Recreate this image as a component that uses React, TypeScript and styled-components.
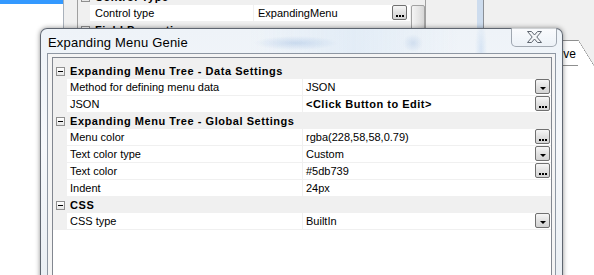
import React from "react";
import styled, { createGlobalStyle } from "styled-components";

type PropItem = {
  label: string;
  value: string;
  button?: "drop" | "dots";
  bold?: boolean;
};

type Category = {
  title: string;
  items: PropItem[];
};

const categories: Category[] = [
  {
    title: "Expanding Menu Tree - Data Settings",
    items: [
      { label: "Method for defining menu data", value: "JSON", button: "drop" },
      { label: "JSON", value: "<Click Button to Edit>", button: "dots", bold: true },
    ],
  },
  {
    title: "Expanding Menu Tree - Global Settings",
    items: [
      { label: "Menu color", value: "rgba(228,58,58,0.79)", button: "dots" },
      { label: "Text color type", value: "Custom", button: "drop" },
      { label: "Text color", value: "#5db739", button: "dots" },
      { label: "Indent", value: "24px" },
    ],
  },
  {
    title: "CSS",
    items: [{ label: "CSS type", value: "BuiltIn", button: "drop" }],
  },
];

const GlobalStyle = createGlobalStyle`
  html, body {
    margin: 0;
    padding: 0;
  }
  body {
    font-family: "Liberation Sans", Arial, sans-serif;
    font-size: 11px;
    color: #000;
  }
`;

const Screen = styled.div`
  position: relative;
  width: 594px;
  height: 275px;
  overflow: hidden;
  background: #f0f0f0;
`;

/* ---------- window behind the dialog ---------- */

const BgWindow = styled.div`
  display: flex;
  height: 100%;
`;

const TreePane = styled.div`
  width: 63px;
  background: #fff;
  border-right: 1px solid #a9b1bb;
`;

const Selection = styled.div`
  height: 4px;
  background: #3399ff;
`;

const Splitter = styled.div`
  width: 13px;
  background: #f0f0f0;
  border-right: 1px solid #a0a0a0;
`;

const BgGrid = styled.div`
  width: 332px;
  background: #fff;
  overflow: hidden;
`;

const BgGridInner = styled.div`
  margin-top: -11px;
`;

const Scrollbar = styled.div`
  width: 15px;
  background: #f0f0f0;
  border-right: 1px solid #a0a0a0;
  padding-top: 5px;
  display: flex;
  justify-content: center;
`;

const Thumb = styled.div`
  width: 12px;
  height: 60px;
  border: 1px solid #a2a2a2;
  border-radius: 2px;
  background: linear-gradient(90deg, #f4f4f4, #e4e4e4 60%, #d6d6d6);
`;

const RightArea = styled.div`
  flex: 1;
  display: flex;
`;

const Gap = styled.div`
  width: 51px;
`;

const BlueRule = styled.div`
  width: 6px;
  background: #cddcee;
  border-right: 1px solid #8a8f96;
`;

const TabPane = styled.div`
  flex: 1;
  display: flex;
  flex-direction: column;
`;

const TabStrip = styled.div`
  display: flex;
  padding: 40px 0 0 63px;
  border-bottom: 1px solid #8e8f8f;
`;

const Tab = styled.div`
  position: relative;
  height: 25px;
  padding: 6px 2px 0 6px;
  box-sizing: border-box;
  background: #fff;
  border-top: 1px solid #8e8f8f;
  border-left: 1px solid #8e8f8f;
  font-size: 12px;

  &::after {
    content: "";
    position: absolute;
    top: -1px;
    right: -16px;
    width: 16px;
    height: 26px;
    background: linear-gradient(
      to top right,
      #fff 49%,
      #8e8f8f 50%,
      transparent 53%
    );
  }
`;

const TabBody = styled.div`
  flex: 1;
  background: #fff;
`;

/* ---------- property grid parts ---------- */

const CatRow = styled.div<{ $indent: number }>`
  display: flex;
  align-items: center;
  gap: 5px;
  height: 16px;
  padding-left: ${(p) => p.$indent}px;
  background: #f0f0f0;
  font-weight: bold;
  letter-spacing: 0.55px;
  white-space: nowrap;
`;

const MinusBox = styled.span`
  position: relative;
  width: 9px;
  height: 9px;
  box-sizing: border-box;
  border: 1px solid #8f8f8f;
  background: linear-gradient(#fff, #e6e6e6);
  flex-shrink: 0;

  &::after {
    content: "";
    position: absolute;
    left: 1px;
    top: 3px;
    width: 5px;
    height: 1px;
    background: #000;
  }
`;

const PropRow = styled.div`
  display: flex;
  height: 17px;
  box-sizing: border-box;
  border-bottom: 1px solid #f0f0f0;
`;

const Margin = styled.div<{ $w: number }>`
  width: ${(p) => p.$w}px;
  background: #f0f0f0;
  flex-shrink: 0;
`;

const Label = styled.div<{ $w: number; $pad: number }>`
  width: ${(p) => p.$w}px;
  padding-left: ${(p) => p.$pad}px;
  box-sizing: border-box;
  border-right: 1px solid #f0f0f0;
  line-height: 16px;
  white-space: nowrap;
  overflow: hidden;
  flex-shrink: 0;
`;

const Value = styled.div<{ $pad: number; $bold?: boolean; $right: number }>`
  flex: 1;
  display: flex;
  align-items: flex-start;
  padding-left: ${(p) => p.$pad}px;
  padding-right: ${(p) => p.$right}px;
  line-height: 16px;
  font-weight: ${(p) => (p.$bold ? "bold" : "normal")};
  letter-spacing: ${(p) => (p.$bold ? "0.5px" : "0")};
  white-space: nowrap;

  & > span {
    flex: 1;
  }
`;

const SmallButton = styled.div`
  width: 15px;
  height: 15px;
  box-sizing: border-box;
  border: 1px solid #707070;
  border-radius: 2px;
  background: linear-gradient(#f6f6f6, #e2e2e2 50%, #d3d3d3);
  display: flex;
  align-items: flex-end;
  justify-content: center;
  padding-bottom: 2px;
  gap: 1px;
`;

const Arrow = styled.span`
  width: 0;
  height: 0;
  margin-bottom: 1px;
  border-left: 3px solid transparent;
  border-right: 3px solid transparent;
  border-top: 3px solid #000;
`;

const Dot = styled.span`
  width: 2px;
  height: 2px;
  background: #000;
`;

const CellButton = ({ kind }: { kind: "drop" | "dots" }) =>
  kind === "drop" ? (
    <SmallButton>
      <Arrow />
    </SmallButton>
  ) : (
    <SmallButton>
      <Dot />
      <Dot />
      <Dot />
    </SmallButton>
  );

/* ---------- dialog ---------- */

const Dialog = styled.div`
  position: absolute;
  left: 40px;
  top: 28px;
  width: 523px;
  height: 262px;
  box-sizing: border-box;
  border: 1px solid rgba(60, 68, 80, 0.8);
  border-bottom: none;
  border-radius: 7px 7px 0 0;
  padding: 0 6px;
  display: flex;
  flex-direction: column;
  box-shadow: 0 0 5px rgba(0, 0, 0, 0.45);
  background: radial-gradient(
      ellipse 42px 7px at 255px 14px,
      rgba(140, 175, 220, 0.35),
      transparent
    ),
    radial-gradient(
      ellipse 10px 9px at 372px 14px,
      rgba(150, 180, 220, 0.3),
      transparent
    ),
    radial-gradient(
      ellipse 6px 30px at 440px 20px,
      rgba(170, 200, 235, 0.35),
      transparent
    ),
    linear-gradient(90deg, transparent 40%, rgba(215, 230, 245, 0.5) 60%, transparent 80%),
    linear-gradient(180deg, #eef3f8 0%, #f6f8fb 45%, #e9eef3 100%);
`;

const TitleBar = styled.div`
  display: flex;
  align-items: flex-start;
  height: 24px;
  flex-shrink: 0;
`;

const Title = styled.div`
  margin: 6px 0 0 1px;
  font-size: 13px;
  line-height: 16px;
  letter-spacing: 0.2px;
  color: #000;
`;

const CloseButton = styled.div`
  margin: -1px -1px 0 auto;
  width: 46px;
  height: 19px;
  box-sizing: border-box;
  border: 1px solid rgba(90, 100, 115, 0.55);
  border-top: none;
  border-radius: 0 0 5px 5px;
  background: linear-gradient(rgba(255, 255, 255, 0.7), rgba(235, 240, 246, 0.6));
  display: flex;
  align-items: center;
  justify-content: center;
`;

const Client = styled.div`
  flex: 1;
  display: flex;
  border: 1px solid #8e97a3;
  border-bottom: none;
  background: #f4f4f4;
  padding: 3px 3px 0 4px;
`;

const Grid = styled.div`
  flex: 1;
  border: 1px solid #828790;
  border-bottom: none;
  background: #fff;
`;

const GridTop = styled.div`
  height: 5px;
  background: #f0f0f0;
`;

const CloseGlyph = () => (
  <svg width="15" height="12" viewBox="0 0 15 12">
    <polygon
      points="0.5,0.5 4.5,0.5 7.5,4 10.5,0.5 14.5,0.5 9.8,6 14.5,11.5 10.5,11.5 7.5,8 4.5,11.5 0.5,11.5 5.2,6"
      fill="#f4f6f8"
      stroke="#5f6670"
      strokeWidth="1"
      strokeLinejoin="round"
    />
  </svg>
);

const App = () => {
  return (
    <Screen>
      <GlobalStyle />
      <BgWindow>
        <TreePane>
          <Selection />
        </TreePane>
        <Splitter />
        <BgGrid>
          <BgGridInner>
            <CatRow $indent={3}>
              <MinusBox />
              <span>Control Type</span>
            </CatRow>
            <PropRow>
              <Margin $w={12} />
              <Label $w={164} $pad={5}>
                Control type
              </Label>
              <Value $pad={4} $right={3}>
                <span>ExpandingMenu</span>
                <CellButton kind="dots" />
              </Value>
            </PropRow>
            <CatRow $indent={3}>
              <MinusBox />
              <span>Field Properties</span>
            </CatRow>
          </BgGridInner>
        </BgGrid>
        <Scrollbar>
          <Thumb />
        </Scrollbar>
        <RightArea>
          <Gap />
          <BlueRule />
          <TabPane>
            <TabStrip>
              <Tab>Live</Tab>
            </TabStrip>
            <TabBody />
          </TabPane>
        </RightArea>
      </BgWindow>

      <Dialog>
        <TitleBar>
          <Title>Expanding Menu Genie</Title>
          <CloseButton>
            <CloseGlyph />
          </CloseButton>
        </TitleBar>
        <Client>
          <Grid>
            <GridTop />
            {categories.map((cat) => (
              <React.Fragment key={cat.title}>
                <CatRow $indent={3}>
                  <MinusBox />
                  <span>{cat.title}</span>
                </CatRow>
                {cat.items.map((item) => (
                  <PropRow key={item.label}>
                    <Margin $w={14} />
                    <Label $w={236} $pad={3}>
                      {item.label}
                    </Label>
                    <Value $pad={3} $bold={item.bold} $right={1}>
                      <span>{item.value}</span>
                      {item.button && <CellButton kind={item.button} />}
                    </Value>
                  </PropRow>
                ))}
              </React.Fragment>
            ))}
          </Grid>
        </Client>
      </Dialog>
    </Screen>
  );
};

export default App;
